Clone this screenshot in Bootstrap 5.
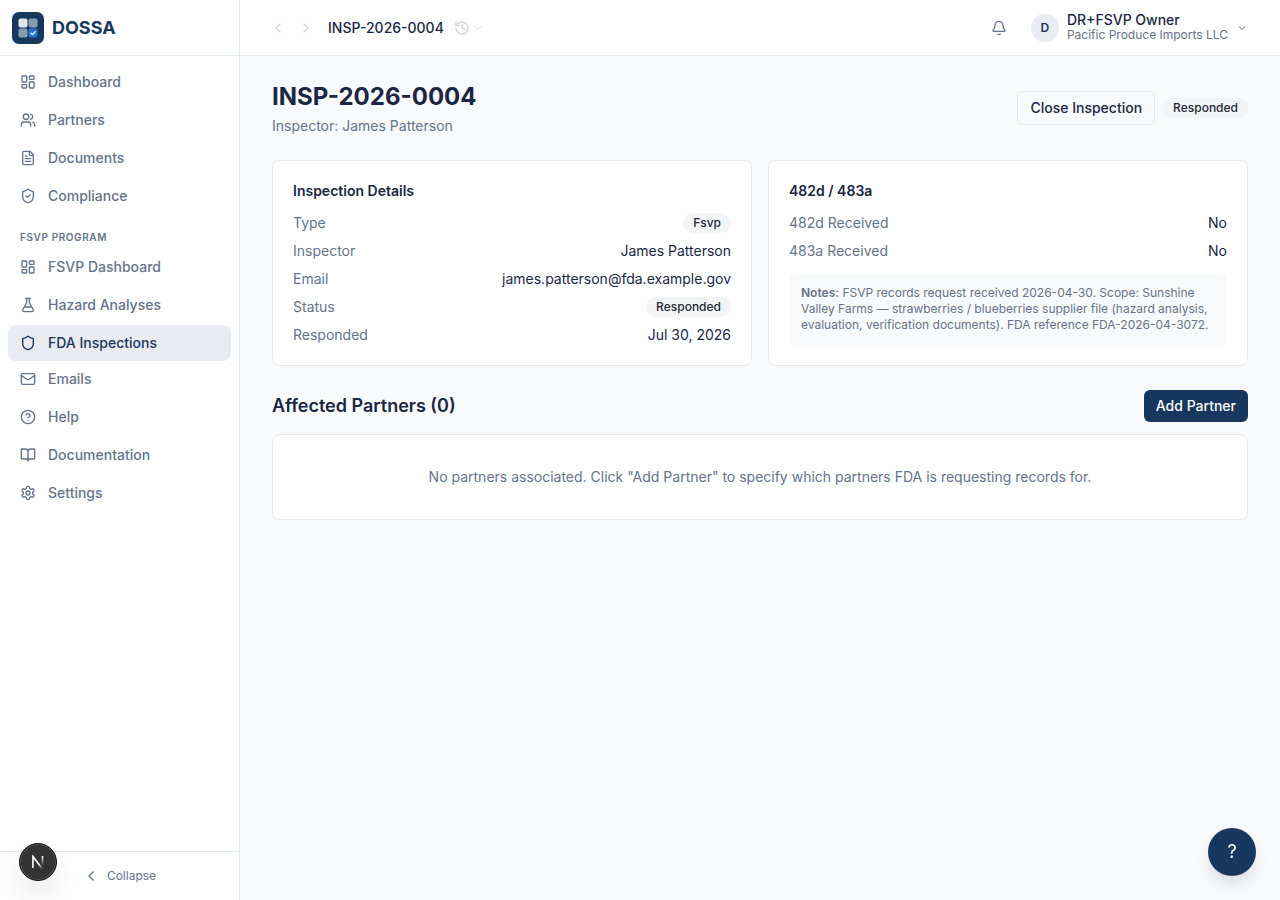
<!DOCTYPE html>
<html lang="en">
<head>
<meta charset="utf-8">
<meta name="viewport" content="width=device-width, initial-scale=1">
<title>INSP-2026-0004 · DOSSA</title>
<link href="https://cdn.jsdelivr.net/npm/bootstrap@5.3.0/dist/css/bootstrap.min.css" rel="stylesheet">
<style>
  :root { --navy: #17375e; --ink: #1a2744; --muted: #64748b; --line: #e2e8f0; --canvas: #f9fafc; --tint: #e8ebef; }
  body { font-family: Inter, "Liberation Sans", sans-serif; font-size: 14px; line-height: 20px; color: var(--ink); background: var(--canvas); }
  .icon { width: 16px; height: 16px; flex: none; fill: none; stroke: currentColor; stroke-width: 2; stroke-linecap: round; stroke-linejoin: round; }
  .icon-sm { width: 12px; height: 12px; }
  .plain { border: 0; background: none; padding: 0; color: inherit; }
  .medium { font-weight: 500; }
  .ink-muted { color: var(--muted); }
  .sidebar { width: 240px; height: 100vh; top: 0; background: #fff; border-right: 1px solid var(--line); }
  .bar { height: 56px; border-bottom: 1px solid var(--line); background: #fff; }
  .brand-bar { padding: 0 12px; }
  .brand { font-size: 18px; line-height: 24px; font-weight: 700; color: var(--navy); }
  .side-link { display: flex; align-items: center; gap: 12px; padding: 8px 12px; border-radius: 8px; font-weight: 500; color: var(--muted); text-decoration: none; }
  .side-link:hover, .side-link.active { background: var(--tint); color: var(--navy); }
  .side-group { display: grid; gap: 2px; }
  .side-heading { padding: 16px 12px 4px; font-size: 10px; line-height: 15px; font-weight: 600; letter-spacing: .06em; color: var(--muted); }
  .side-foot { border-top: 1px solid var(--line); }
  .collapse-btn { font-size: 12px; line-height: 16px; color: var(--muted); padding: 8px; }
  .content { min-width: 0; }
  .step { width: 28px; height: 28px; }
  .trail { gap: 2px; margin-left: 10px; }
  .faded { color: #d0d5dd; }
  .avatar { width: 28px; height: 28px; border-radius: 50%; background: var(--tint); color: var(--navy); font-size: 12px; font-weight: 600; }
  .who { line-height: 16px; }
  .org { font-size: 12px; line-height: 14px; padding-bottom: 1px; color: var(--muted); }
  .page { padding: 24px 32px; }
  .page-title { font-size: 24px; line-height: 34px; font-weight: 700; margin-bottom: 2px; }
  .section-title { font-size: 18px; line-height: 28px; font-weight: 600; }
  .section-head { margin-bottom: 12px; }
  .panel { background: #fff; border: 1px solid var(--line); border-radius: 8px; padding: 20px; }
  .panel-title { font-size: 14px; line-height: 20px; font-weight: 600; margin-bottom: 12px; }
  .facts { display: grid; gap: 8px; margin: 0; }
  .facts dt { font-weight: 400; color: var(--muted); }
  .facts dd { margin: 0; }
  .pill { display: block; padding: 2px 10px; border-radius: 10px; background: #f3f4f6; color: #1f2937; font-size: 12px; line-height: 16px; font-weight: 500; }
  .btn { --bs-btn-font-size: 14px; --bs-btn-line-height: 20px; --bs-btn-font-weight: 500; --bs-btn-padding-x: 12px; --bs-btn-padding-y: 6px; --bs-btn-border-radius: 6px; }
  .btn-quiet { --bs-btn-color: var(--ink); --bs-btn-border-color: var(--line); --bs-btn-hover-bg: var(--tint); }
  .btn-navy { --bs-btn-color: #fff; --bs-btn-bg: var(--navy); --bs-btn-hover-bg: var(--ink); --bs-btn-hover-color: #fff; border: 0; }
  .notes { margin: 12px 0 0; padding: 12px; border-radius: 6px; background: var(--canvas); color: var(--muted); font-size: 12px; line-height: 16px; }
  .notes strong { font-weight: 600; }
  .empty { padding: 32px; }
  .help-fab { right: 24px; bottom: 24px; width: 48px; height: 48px; border-radius: 50%; background: var(--navy); color: #fff; font-size: 18px; box-shadow: 0 8px 16px -2px rgba(0,0,0,.14); }
  .dev-badge { left: 19px; bottom: 19px; z-index: 1030; width: 38px; height: 38px; border-radius: 50%; background: #333; border: 1px solid #111; box-shadow: inset 0 0 0 1px #555, 0 16px 32px -8px rgba(0,0,0,.24); }
</style>
</head>
<body>
<svg class="d-none" aria-hidden="true">
  <symbol id="dash" viewBox="0 0 24 24"><rect x="3" y="3" width="7" height="9" rx="1"/><rect x="14" y="3" width="7" height="5" rx="1"/><rect x="14" y="12" width="7" height="9" rx="1"/><rect x="3" y="16" width="7" height="5" rx="1"/></symbol>
  <symbol id="users" viewBox="0 0 24 24"><path d="M16 21v-2a4 4 0 0 0-4-4H6a4 4 0 0 0-4 4v2"/><circle cx="9" cy="7" r="4"/><path d="M22 21v-2a4 4 0 0 0-3-3.87M16 3.13a4 4 0 0 1 0 7.75"/></symbol>
  <symbol id="doc" viewBox="0 0 24 24"><path d="M15 2H6a2 2 0 0 0-2 2v16a2 2 0 0 0 2 2h12a2 2 0 0 0 2-2V7Z"/><path d="M14 2v4a2 2 0 0 0 2 2h4M10 9H8M16 13H8M16 17H8"/></symbol>
  <symbol id="shield" viewBox="0 0 24 24"><path d="M20 13c0 5-3.5 7.5-7.66 8.95a1 1 0 0 1-.67-.01C7.5 20.5 4 18 4 13V6a1 1 0 0 1 1-1c2 0 4.5-1.2 6.24-2.72a1.17 1.17 0 0 1 1.52 0C14.51 3.81 17 5 19 5a1 1 0 0 1 1 1z"/></symbol>
  <symbol id="flask" viewBox="0 0 24 24"><path d="M14 2v6a2 2 0 0 0 .245.96l5.51 10.08A2 2 0 0 1 18 22H6a2 2 0 0 1-1.755-2.96l5.51-10.08A2 2 0 0 0 10 8V2M6.453 15h11.094M8.5 2h7"/></symbol>
  <symbol id="mail" viewBox="0 0 24 24"><rect x="2" y="4" width="20" height="16" rx="2"/><path d="m22 7-8.97 5.7a1.94 1.94 0 0 1-2.06 0L2 7"/></symbol>
  <symbol id="help" viewBox="0 0 24 24"><circle cx="12" cy="12" r="10"/><path d="M9.09 9a3 3 0 0 1 5.83 1c0 2-3 3-3 3M12 17h.01"/></symbol>
  <symbol id="book" viewBox="0 0 24 24"><path d="M12 7v14M3 18a1 1 0 0 1-1-1V4a1 1 0 0 1 1-1h5a4 4 0 0 1 4 4 4 4 0 0 1 4-4h5a1 1 0 0 1 1 1v13a1 1 0 0 1-1 1h-6a3 3 0 0 0-3 3 3 3 0 0 0-3-3z"/></symbol>
  <symbol id="gear" viewBox="0 0 24 24"><path d="M12.22 2h-.44a2 2 0 0 0-2 2v.18a2 2 0 0 1-1 1.73l-.43.25a2 2 0 0 1-2 0l-.15-.08a2 2 0 0 0-2.73.73l-.22.38a2 2 0 0 0 .73 2.73l.15.1a2 2 0 0 1 1 1.72v.51a2 2 0 0 1-1 1.74l-.15.09a2 2 0 0 0-.73 2.73l.22.38a2 2 0 0 0 2.73.73l.15-.08a2 2 0 0 1 2 0l.43.25a2 2 0 0 1 1 1.73V20a2 2 0 0 0 2 2h.44a2 2 0 0 0 2-2v-.18a2 2 0 0 1 1-1.73l.43-.25a2 2 0 0 1 2 0l.15.08a2 2 0 0 0 2.73-.73l.22-.39a2 2 0 0 0-.73-2.73l-.15-.08a2 2 0 0 1-1-1.74v-.5a2 2 0 0 1 1-1.74l.15-.09a2 2 0 0 0 .73-2.73l-.22-.38a2 2 0 0 0-2.73-.73l-.15.08a2 2 0 0 1-2 0l-.43-.25a2 2 0 0 1-1-1.73V4a2 2 0 0 0-2-2z"/><circle cx="12" cy="12" r="3"/></symbol>
  <symbol id="left" viewBox="0 0 24 24"><path d="m15 18-6-6 6-6"/></symbol>
  <symbol id="right" viewBox="0 0 24 24"><path d="m9 18 6-6-6-6"/></symbol>
  <symbol id="down" viewBox="0 0 24 24"><path d="m6 9 6 6 6-6"/></symbol>
  <symbol id="history" viewBox="0 0 24 24"><path d="M3 12a9 9 0 1 0 9-9 9.75 9.75 0 0 0-6.74 2.74L3 8"/><path d="M3 3v5h5M12 7v5l4 2"/></symbol>
  <symbol id="bell" viewBox="0 0 24 24"><path d="M10.268 21a2 2 0 0 0 3.464 0M3.262 15.326A1 1 0 0 0 4 17h16a1 1 0 0 0 .74-1.673C19.41 13.956 18 12.499 18 8A6 6 0 0 0 6 8c0 4.499-1.411 5.956-2.738 7.326"/></symbol>
</svg>

<div class="d-flex align-items-start">
  <aside class="sidebar d-flex flex-column flex-shrink-0 sticky-top">
    <div class="bar brand-bar d-flex align-items-center gap-2 flex-shrink-0">
      <svg width="32" height="32" viewBox="0 0 32 32" aria-hidden="true">
        <rect width="32" height="32" rx="7" fill="#17375e"/>
        <rect x="6.5" y="6.5" width="9" height="9" rx="2" fill="#fff" fill-opacity=".88"/>
        <rect x="16.5" y="6.5" width="9" height="9" rx="2" fill="#fff" fill-opacity=".5"/>
        <rect x="6.5" y="16.5" width="9" height="9" rx="2" fill="#fff" fill-opacity=".5"/>
        <rect x="16.5" y="16.5" width="9" height="9" rx="2" fill="#2474d4"/>
        <path d="m19 21.2 1.5 1.4 2.8-3" fill="none" stroke="#fff" stroke-width="1.3" stroke-linecap="round" stroke-linejoin="round"/>
      </svg>
      <span class="brand">DOSSA</span>
    </div>
    <nav class="flex-grow-1 overflow-auto p-2" aria-label="Main">
      <div class="side-group">
        <a class="side-link" href="#"><svg class="icon"><use href="#dash"/></svg>Dashboard</a>
        <a class="side-link" href="#"><svg class="icon"><use href="#users"/></svg>Partners</a>
        <a class="side-link" href="#"><svg class="icon"><use href="#doc"/></svg>Documents</a>
        <a class="side-link" href="#"><svg class="icon" viewBox="0 0 24 24"><use href="#shield"/><path d="m9 12 2 2 4-4"/></svg>Compliance</a>
      </div>
      <div class="side-heading">FSVP PROGRAM</div>
      <div class="side-group">
        <a class="side-link" href="#"><svg class="icon"><use href="#dash"/></svg>FSVP Dashboard</a>
        <a class="side-link" href="#"><svg class="icon"><use href="#flask"/></svg>Hazard Analyses</a>
        <a class="side-link active" href="#" aria-current="page"><svg class="icon"><use href="#shield"/></svg>FDA Inspections</a>
      </div>
      <div class="side-group">
        <a class="side-link" href="#"><svg class="icon"><use href="#mail"/></svg>Emails</a>
        <a class="side-link" href="#"><svg class="icon"><use href="#help"/></svg>Help</a>
        <a class="side-link" href="#"><svg class="icon"><use href="#book"/></svg>Documentation</a>
        <a class="side-link" href="#"><svg class="icon"><use href="#gear"/></svg>Settings</a>
      </div>
    </nav>
    <div class="side-foot p-2">
      <button type="button" class="plain collapse-btn d-flex align-items-center justify-content-center gap-2 w-100"><svg class="icon"><use href="#left"/></svg>Collapse</button>
    </div>
  </aside>

  <div class="content flex-grow-1">
    <header class="bar d-flex align-items-center justify-content-between ps-4 pe-3">
      <div class="d-flex align-items-center">
        <button type="button" class="plain step faded d-flex align-items-center justify-content-center" aria-label="Back"><svg class="icon"><use href="#left"/></svg></button>
        <button type="button" class="plain step faded d-flex align-items-center justify-content-center" aria-label="Forward"><svg class="icon"><use href="#right"/></svg></button>
        <span class="medium ms-2">INSP-2026-0004</span>
        <button type="button" class="plain trail faded d-flex align-items-center" aria-label="History"><svg class="icon"><use href="#history"/></svg><svg class="icon icon-sm"><use href="#down"/></svg></button>
      </div>
      <div class="d-flex align-items-center gap-4 pe-3">
        <button type="button" class="plain ink-muted d-flex" aria-label="Notifications"><svg class="icon"><use href="#bell"/></svg></button>
        <button type="button" class="plain d-flex align-items-center gap-2 text-start">
          <span class="avatar d-flex align-items-center justify-content-center">D</span>
          <span><span class="who medium d-block">DR+FSVP Owner</span><span class="org d-block">Pacific Produce Imports LLC</span></span>
          <svg class="icon icon-sm ink-muted"><use href="#down"/></svg>
        </button>
      </div>
    </header>

    <main class="page d-grid gap-4">
      <div class="d-flex align-items-center justify-content-between gap-3">
        <div>
          <h1 class="page-title">INSP-2026-0004</h1>
          <p class="ink-muted mb-0">Inspector: James Patterson</p>
        </div>
        <div class="d-flex align-items-center gap-2">
          <button type="button" class="btn btn-quiet">Close Inspection</button>
          <span class="pill">Responded</span>
        </div>
      </div>

      <div class="row g-3">
        <div class="col-md-6">
          <section class="panel h-100">
            <h2 class="panel-title">Inspection Details</h2>
            <dl class="facts">
              <div class="d-flex justify-content-between"><dt>Type</dt><dd><span class="pill">Fsvp</span></dd></div>
              <div class="d-flex justify-content-between"><dt>Inspector</dt><dd>James Patterson</dd></div>
              <div class="d-flex justify-content-between"><dt>Email</dt><dd>james.patterson@fda.example.gov</dd></div>
              <div class="d-flex justify-content-between"><dt>Status</dt><dd><span class="pill">Responded</span></dd></div>
              <div class="d-flex justify-content-between"><dt>Responded</dt><dd>Jul 30, 2026</dd></div>
            </dl>
          </section>
        </div>
        <div class="col-md-6">
          <section class="panel h-100">
            <h2 class="panel-title">482d / 483a</h2>
            <dl class="facts">
              <div class="d-flex justify-content-between"><dt>482d Received</dt><dd>No</dd></div>
              <div class="d-flex justify-content-between"><dt>483a Received</dt><dd>No</dd></div>
            </dl>
            <p class="notes"><strong>Notes:</strong> FSVP records request received 2026-04-30. Scope: Sunshine Valley Farms — strawberries / blueberries supplier file (hazard analysis, evaluation, verification documents). FDA reference FDA-2026-04-3072.</p>
          </section>
        </div>
      </div>

      <section>
        <div class="section-head d-flex align-items-center justify-content-between">
          <h2 class="section-title mb-0">Affected Partners (0)</h2>
          <button type="button" class="btn btn-navy">Add Partner</button>
        </div>
        <div class="panel empty text-center ink-muted">No partners associated. Click "Add Partner" to specify which partners FDA is requesting records for.</div>
      </section>
    </main>
  </div>
</div>

<button type="button" class="plain help-fab position-fixed z-3" aria-label="Help">?</button>
<button type="button" class="plain dev-badge position-fixed d-flex align-items-center justify-content-center" aria-label="Developer tools">
  <svg width="14" height="14" viewBox="0 0 14 14" fill="none" stroke-width="1.6" aria-hidden="true">
    <defs><linearGradient id="fade" gradientUnits="userSpaceOnUse" x1="0" y1="1" x2="0" y2="11"><stop stop-color="#fff"/><stop offset="1" stop-color="#fff" stop-opacity="0"/></linearGradient><linearGradient id="tail" gradientUnits="userSpaceOnUse" x1="8" y1="9" x2="12" y2="14"><stop stop-color="#fff"/><stop offset="1" stop-color="#fff" stop-opacity="0"/></linearGradient></defs>
    <path d="M1.9 13V1.4l9.2 12" stroke="url(#tail)"/><path d="M11.5 1v9" stroke="url(#fade)"/>
  </svg>
</button>
<script src="https://cdn.jsdelivr.net/npm/bootstrap@5.3.0/dist/js/bootstrap.bundle.min.js"></script>
</body>
</html>
